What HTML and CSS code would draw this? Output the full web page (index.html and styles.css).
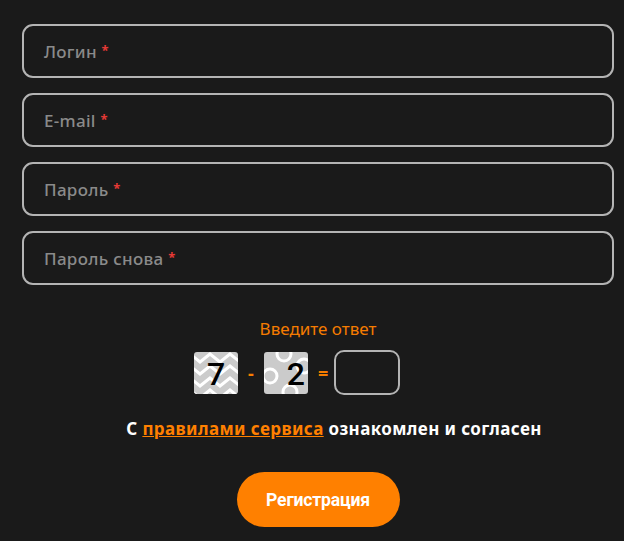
FILE: index.html
```html
<!DOCTYPE html>
<html lang="ru">
<head>
    <meta charset="UTF-8">
    <meta name="viewport" content="width=device-width, initial-scale=1.0">
    <title>Регистрация</title>
    <link rel="stylesheet" href="styles.css">
</head>
<body>

    <form class="reg-form">
        <div class="field"><span class="ph">Логин <b>*</b></span></div>
        <div class="field"><span class="ph">E-mail <b>*</b></span></div>
        <div class="field"><span class="ph">Пароль <b>*</b></span></div>
        <div class="field"><span class="ph">Пароль снова <b>*</b></span></div>

        <div class="captcha">
            <p class="captcha-title">Введите ответ</p>
            <div class="captcha-row">
                <div class="cap-img">
                    <svg width="44" height="42" viewBox="0 0 44 42">
                        <rect width="44" height="42" fill="#cbcbcb"/>
                        <path d="M-4 2 L6 10 L16 2 L26 10 L36 2 L46 10 M-4 14 L6 22 L16 14 L26 22 L36 14 L46 22 M-4 26 L6 34 L16 26 L26 34 L36 26 L46 34 M-4 38 L6 46 L16 38 L26 46 L36 38 L46 46" fill="none" stroke="#fff" stroke-width="3"/>
                    </svg>
                    <span class="digit">7</span>
                </div>
                <span class="op">-</span>
                <div class="cap-img">
                    <svg width="44" height="42" viewBox="0 0 44 42">
                        <rect width="44" height="42" fill="#cbcbcb"/>
                        <circle cx="20" cy="2" r="7" fill="none" stroke="#fff" stroke-width="3"/>
                        <circle cx="40" cy="14" r="7" fill="none" stroke="#fff" stroke-width="3"/>
                        <circle cx="6" cy="24" r="7" fill="none" stroke="#fff" stroke-width="3"/>
                        <circle cx="26" cy="40" r="7" fill="none" stroke="#fff" stroke-width="3"/>
                    </svg>
                    <span class="digit digit-right">2</span>
                </div>
                <span class="op">=</span>
                <div class="answer"></div>
            </div>
        </div>

        <p class="agree">С <a href="#">правилами сервиса</a> ознакомлен и согласен</p>

        <div class="submit-row">
            <button type="button" class="btn">Регистрация</button>
        </div>
    </form>

</body>
</html>
```

FILE: styles.css
```css
body {
    margin: 0;
    background-color: #1a1a1a;
    font-family: "Noto Sans", Arial, sans-serif;
}

.reg-form {
    padding: 24px 10px 0 22px;
    display: flex;
    flex-direction: column;
}

.field {
    height: 50px;
    border: 2px solid #b4b4b4;
    border-radius: 11px;
    margin-bottom: 15px;
    display: flex;
    align-items: center;
    padding-left: 20px;
}

.ph {
    color: #8a8a8a;
    font-size: 17px;
    font-weight: 500;
    letter-spacing: 0.3px;
}

.ph b {
    color: #e53935;
    font-size: 13px;
    vertical-align: 3px;
}

.captcha {
    text-align: center;
    margin-top: 17px;
}

.captcha-title {
    margin: 0 0 10px;
    color: #f57c00;
    font-size: 17px;
}

.captcha-row {
    display: flex;
    justify-content: center;
    align-items: center;
    gap: 10px;
    padding-right: 42px;
}

.cap-img {
    position: relative;
    width: 44px;
    height: 42px;
    border-radius: 3px;
    overflow: hidden;
}

.cap-img svg {
    display: block;
}

.digit {
    position: absolute;
    top: 1px;
    left: 0;
    right: 0;
    font-family: Roboto, Arial, sans-serif;
    font-weight: 500;
    font-size: 32px;
    line-height: 42px;
    color: #000;
}

.digit-right {
    text-align: right;
    right: 3px;
}

.op {
    color: #f57c00;
    font-size: 18px;
    font-weight: 700;
    width: 6px;
}

.answer {
    width: 62px;
    height: 41px;
    border: 2px solid #b4b4b4;
    border-radius: 10px;
}

.agree {
    margin: 22px 0 0;
    padding-left: 32px;
    text-align: center;
    color: #fff;
    font-weight: 700;
    font-size: 17px;
    letter-spacing: 0.4px;
}

.agree a {
    color: #ff8000;
}

.submit-row {
    display: flex;
    justify-content: center;
    margin-top: 32px;
}

.btn {
    width: 163px;
    height: 55px;
    border: none;
    border-radius: 28px;
    background-color: #ff8000;
    color: #fff;
    font-family: Roboto, Arial, sans-serif;
    font-weight: 700;
    font-size: 17.6px;
    letter-spacing: -0.2px;
    cursor: pointer;
}
```
